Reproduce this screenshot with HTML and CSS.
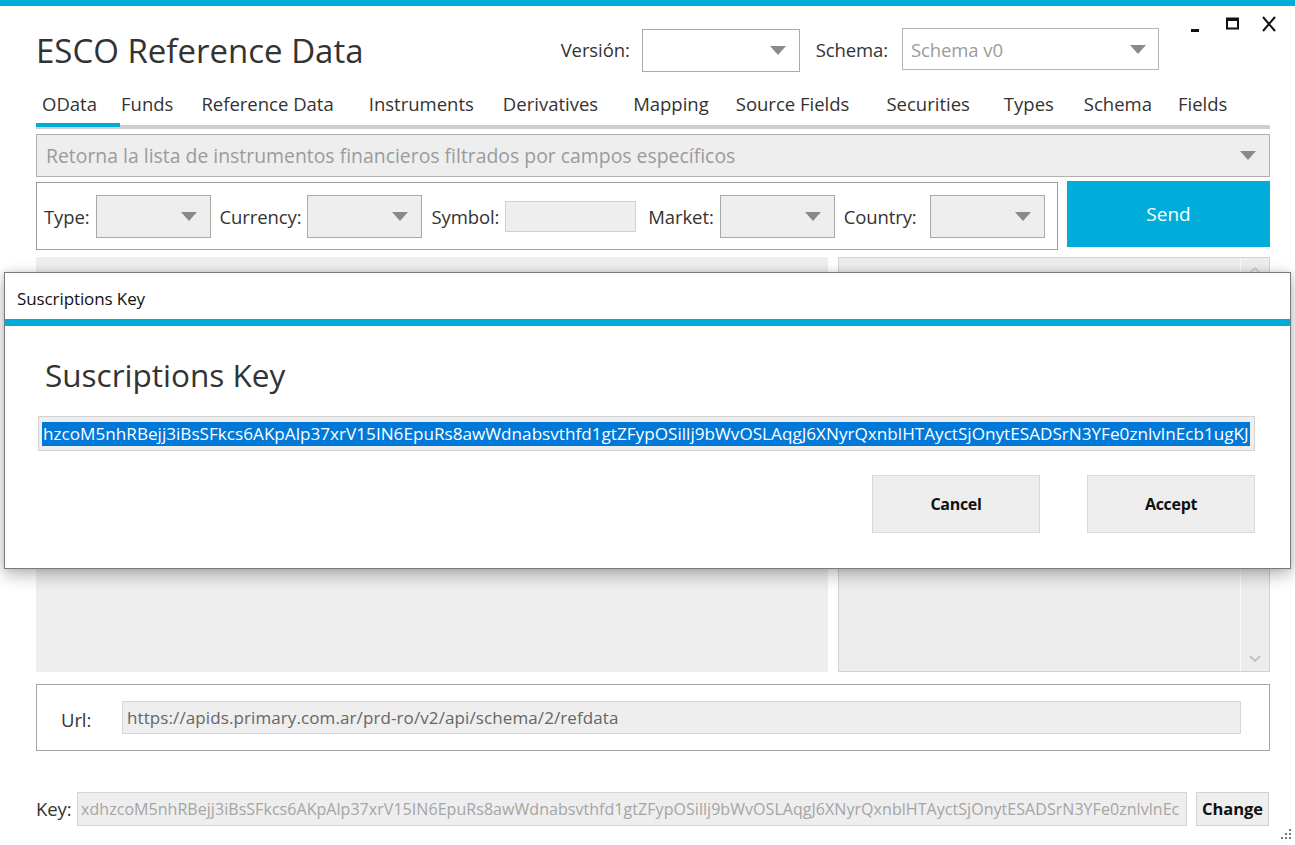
FILE: index.html
```html
<!DOCTYPE html>
<html>
<head>
<meta charset="utf-8">
<link rel="stylesheet" href="styles.css">
</head>
<body>
<div class="window">
  <div class="topbar"></div>
  <div class="header">
    <div class="title">ESCO Reference Data</div>
    <div class="selectors">
      <span class="lbl">Versión:</span>
      <div class="combo combo-version"><span class="combo-text"></span><svg class="arrow" width="16" height="9" viewBox="0 0 16 9"><polygon points="0,0 16,0 8,9" fill="#8a8a8a"/></svg></div>
      <span class="lbl lbl-schema">Schema:</span>
      <div class="combo combo-schema"><span class="combo-text muted">Schema v0</span><svg class="arrow" width="16" height="9" viewBox="0 0 16 9"><polygon points="0,0 16,0 8,9" fill="#8a8a8a"/></svg></div>
    </div>
    <div class="winctrls">
      <svg class="wc-min" width="12" height="20" viewBox="0 0 12 20"><rect x="2" y="15" width="8" height="3" fill="#111"/></svg>
      <svg class="wc-max" width="16" height="20" viewBox="0 0 16 20"><rect x="2" y="4.5" width="11" height="10" fill="none" stroke="#111" stroke-width="2"/><rect x="2" y="4" width="11" height="3" fill="#111"/></svg>
      <svg class="wc-close" width="16" height="20" viewBox="0 0 16 20"><path d="M2 3 L14 17 M14 3 L2 17" stroke="#111" stroke-width="2"/></svg>
    </div>
  </div>

  <div class="main">
    <div class="tabs">
      <div class="tab active">OData</div>
      <div class="tab t-funds">Funds</div>
      <div class="tab t-ref">Reference Data</div>
      <div class="tab t-instr">Instruments</div>
      <div class="tab t-deriv">Derivatives</div>
      <div class="tab t-map">Mapping</div>
      <div class="tab t-src">Source Fields</div>
      <div class="tab t-sec">Securities</div>
      <div class="tab t-types">Types</div>
      <div class="tab t-schema">Schema</div>
      <div class="tab t-fields">Fields</div>
    </div>

    <div class="combo combo-wide"><span class="combo-text muted">Retorna la lista de instrumentos financieros filtrados por campos específicos</span><svg class="arrow" width="16" height="9" viewBox="0 0 16 9"><polygon points="0,0 16,0 8,9" fill="#8a8a8a"/></svg></div>

    <div class="filter-row">
      <div class="filters">
        <span class="lbl">Type:</span>
        <div class="combo combo-sm"><svg class="arrow" width="16" height="9" viewBox="0 0 16 9"><polygon points="0,0 16,0 8,9" fill="#8a8a8a"/></svg></div>
        <span class="lbl">Currency:</span>
        <div class="combo combo-sm"><svg class="arrow" width="16" height="9" viewBox="0 0 16 9"><polygon points="0,0 16,0 8,9" fill="#8a8a8a"/></svg></div>
        <span class="lbl">Symbol:</span>
        <div class="textbox-sm"></div>
        <span class="lbl">Market:</span>
        <div class="combo combo-sm"><svg class="arrow" width="16" height="9" viewBox="0 0 16 9"><polygon points="0,0 16,0 8,9" fill="#8a8a8a"/></svg></div>
        <span class="lbl lbl-country">Country:</span>
        <div class="combo combo-sm"><svg class="arrow" width="16" height="9" viewBox="0 0 16 9"><polygon points="0,0 16,0 8,9" fill="#8a8a8a"/></svg></div>
      </div>
      <div class="send">Send</div>
    </div>

    <div class="panels">
      <div class="panel-left"></div>
      <div class="panel-right">
        <div class="panel-right-body"></div>
        <div class="vscroll">
          <svg width="12" height="8" viewBox="0 0 12 8"><path d="M2 6 L6 2 L10 6" fill="none" stroke="#c8c8c8" stroke-width="1.5"/></svg>
          <svg width="14" height="9" viewBox="0 0 14 9"><path d="M2 2 L7 7 L12 2" fill="none" stroke="#c0c0c0" stroke-width="1.8"/></svg>
        </div>
      </div>
    </div>

    <div class="urlbox">
      <span class="lbl lbl-url">Url:</span>
      <div class="url-field">https://apids.primary.com.ar/prd-ro/v2/api/schema/2/refdata</div>
    </div>

    <div class="keyrow">
      <span class="lbl lbl-key">Key:</span>
      <div class="key-field">xdhzcoM5nhRBejj3iBsSFkcs6AKpAlp37xrV15IN6EpuRs8awWdnabsvthfd1gtZFypOSillj9bWvOSLAqgJ6XNyrQxnblHTAyctSjOnytESADSrN3YFe0znlvlnEc</div>
      <div class="change-btn">Change</div>
    </div>
  </div>

  <svg class="grip" width="20" height="18" viewBox="0 0 20 18"><g fill="#777"><rect x="16" y="2" width="2" height="2"/><rect x="12" y="6" width="2" height="2"/><rect x="16" y="6" width="2" height="2"/><rect x="8" y="10" width="2" height="2"/><rect x="12" y="10" width="2" height="2"/><rect x="16" y="10" width="2" height="2"/></g></svg>

  <div class="dialog">
    <div class="dialog-title">Suscriptions Key</div>
    <div class="dialog-bar"></div>
    <div class="dialog-body">
      <div class="dialog-heading">Suscriptions Key</div>
      <div class="dialog-field"><span class="sel">hzcoM5nhRBejj3iBsSFkcs6AKpAlp37xrV15IN6EpuRs8awWdnabsvthfd1gtZFypOSillj9bWvOSLAqgJ6XNyrQxnblHTAyctSjOnytESADSrN3YFe0znlvlnEcb1ugKJ</span></div>
      <div class="dialog-buttons">
        <div class="btn">Cancel</div>
        <div class="btn">Accept</div>
      </div>
    </div>
  </div>
</div>
</body>
</html>
```
FILE: styles.css
```css
* { box-sizing: border-box; }
html, body { margin: 0; padding: 0; }
body {
  width: 1295px;
  height: 845px;
  overflow: hidden;
  background: #fff;
  font-family: "Open Sans", "Noto Sans", sans-serif;
  color: #333;
}
.window { position: relative; width: 1295px; height: 845px; }
.topbar { height: 6px; background: #00acd9; }

.header {
  display: flex;
  height: 76px;
  padding-left: 36px;
  padding-right: 18px;
}
.title {
  font-size: 33px;
  line-height: 40px;
  margin-top: 25px;
  color: #333;
  letter-spacing: 0;
  white-space: nowrap;
}
.selectors {
  display: flex;
  align-items: flex-start;
  margin-left: auto;
  margin-top: 22px;
}
.lbl {
  font-size: 18.5px;
  color: #333;
  letter-spacing: -0.1px;
  white-space: nowrap;
}
.selectors .lbl { margin-top: 9px; margin-right: 12px; }
.selectors .lbl-schema { margin-left: 16px; margin-right: 14px; }
.combo {
  display: flex;
  align-items: center;
  background: #eee;
  border: 1px solid #a9a9a9;
  position: relative;
}
.combo .arrow { margin-left: auto; margin-right: 21px; flex: none; }
.combo-text { padding-left: 8px; font-size: 18.5px; letter-spacing: -0.1px; white-space: nowrap; overflow: hidden; }
.muted { color: #9b9b9b; }
.combo-version { width: 158px; height: 43px; background: #fff; margin-top: 1px; }
.combo-schema { width: 257px; height: 42px; background: #fff; border-color: #b5b5b5; }
.combo-schema .arrow { margin-right: 12px; }
.combo-version .arrow { margin-right: 13px; }

.winctrls {
  display: flex;
  margin-left: 30px;
  margin-top: 8px;
  align-self: flex-start;
}
.wc-max { margin-left: 24px; }
.wc-close { margin-left: 20px; }

.main { padding-left: 36px; padding-right: 25px; }

.tabs {
  display: flex;
  height: 47px;
  border-bottom: 4px solid #cfcfcf;
  align-items: center;
}
.tab {
  font-size: 18.5px;
  letter-spacing: 0;
  color: #333;
  padding: 0 16px;
  white-space: nowrap;
  height: 100%;
  display: flex;
  align-items: center;
}
.tab.active {
  width: 84px;
  padding: 0 0 0 6px;
  border-bottom: 4px solid #00acd9;
  margin-bottom: -4px;
}
.t-funds { padding-left: 1px; padding-right: 12px; }
.t-instr { padding-left: 19px; padding-right: 13px; }
.t-deriv { padding-right: 19px; }
.t-map { padding-right: 11px; }
.t-src { padding-right: 21px; }
.t-sec { padding-right: 18px; }
.t-types { padding-right: 14px; }
.t-schema { padding-right: 10px; }

.combo-wide {
  margin-top: 5px;
  height: 43px;
  border-color: #b0b0b0;
}
.combo-wide .combo-text { padding-left: 9px; font-size: 19.4px; letter-spacing: 0; }
.combo-wide .arrow { margin-right: 13px; }

.filter-row {
  display: flex;
  margin-top: 4px;
  gap: 9px;
  align-items: flex-start;
}
.filters {
  width: 1022px;
  height: 68px;
  margin-top: 1px;
  border: 1px solid #9d9d9d;
  display: flex;
  align-items: center;
  padding-left: 7px;
}
.filters .lbl { margin-right: 6px; }
.filters .lbl-country { margin-right: 13px; }
.combo-sm { width: 115px; height: 43px; margin-right: 9px; border-color: #a9a9a9; }
.combo-sm .arrow { margin-right: 13px; }
.textbox-sm { width: 131px; height: 31px; background: #eee; border: 1px solid #cfcfcf; margin-right: 12px; }
.send {
  flex: 1;
  height: 66px;
  background: #00acd9;
  color: #fff;
  font-size: 19px;
  display: flex;
  align-items: center;
  justify-content: center;
  letter-spacing: 0;
}

.panels {
  display: flex;
  gap: 10px;
  margin-top: 7px;
  height: 415px;
}
.panel-left { width: 792px; background: #eeeeee; }
.panel-right {
  flex: 1;
  display: flex;
  background: #ededed;
  border: 1px solid #d2d2d2;
}
.panel-right-body { flex: 1; }
.vscroll {
  width: 29px;
  border-left: 1px solid #fafafa;
  display: flex;
  flex-direction: column;
  justify-content: space-between;
  align-items: center;
  padding: 8px 0 8px 0;
}

.urlbox {
  margin-top: 12px;
  height: 67px;
  border: 1px solid #a5a5a5;
  display: flex;
  align-items: center;
  padding-left: 24px;
}
.lbl-url { width: 61px; margin-top: 4px; }
.url-field {
  width: 1119px;
  height: 33px;
  background: #eee;
  border: 1px solid #d6d6d6;
  font-size: 17px;
  color: #666;
  display: flex;
  align-items: center;
  padding-left: 4px;
  letter-spacing: 0.1px;
  white-space: nowrap;
}

.keyrow {
  margin-top: 40px;
  display: flex;
  align-items: center;
  height: 35px;
}
.lbl-key { width: 41px; }
.key-field {
  width: 1110px;
  height: 34px;
  background: #eee;
  border: 1px solid #d6d6d6;
  font-size: 16px;
  color: #a5a5a5;
  letter-spacing: 0.05px;
  display: flex;
  align-items: center;
  padding-left: 3px;
  white-space: nowrap;
  overflow: hidden;
}
.change-btn {
  margin-left: 9px;
  width: 73px;
  height: 34px;
  background: #eee;
  border: 1px solid #d2d2d2;
  font-size: 16.5px;
  font-weight: 700;
  color: #111;
  display: flex;
  align-items: center;
  justify-content: center;
  letter-spacing: 0;
}

.grip { position: absolute; right: 2px; bottom: 0; }

.dialog {
  position: absolute;
  left: 4px;
  top: 272px;
  width: 1287px;
  height: 297px;
  background: #fff;
  border: 1px solid #7a7a7a;
  box-shadow: 0 6px 16px rgba(0,0,0,0.28), 0 0 6px rgba(0,0,0,0.12);
}
.dialog-title {
  height: 46px;
  font-size: 17px;
  color: #111;
  padding-left: 12px;
  display: flex;
  align-items: center;
  padding-top: 4px;
  letter-spacing: -0.1px;
}
.dialog-bar { height: 7px; background: #00acd9; }
.dialog-body { padding: 27px 35px 0 33px; }
.dialog-heading {
  font-size: 31.5px;
  line-height: 44px;
  color: #333;
  padding-left: 7px;
  letter-spacing: 0;
}
.dialog-field {
  margin-top: 19px;
  height: 35px;
  background: #eee;
  border: 1px solid #d2d2d2;
  display: flex;
  align-items: center;
  padding-left: 3px;
  overflow: hidden;
}
.sel {
  background: #0078d7;
  color: #fff;
  font-size: 17.15px;
  line-height: 24px;
  padding: 0 1px;
  letter-spacing: 0;
  white-space: nowrap;
}
.dialog-buttons {
  display: flex;
  justify-content: flex-end;
  gap: 47px;
  margin-top: 24px;
}
.btn {
  width: 168px;
  height: 58px;
  background: #eee;
  border: 1px solid #d8d8d8;
  display: flex;
  align-items: center;
  justify-content: center;
  font-size: 16px;
  font-weight: 700;
  color: #111;
  letter-spacing: -0.3px;
}
```
